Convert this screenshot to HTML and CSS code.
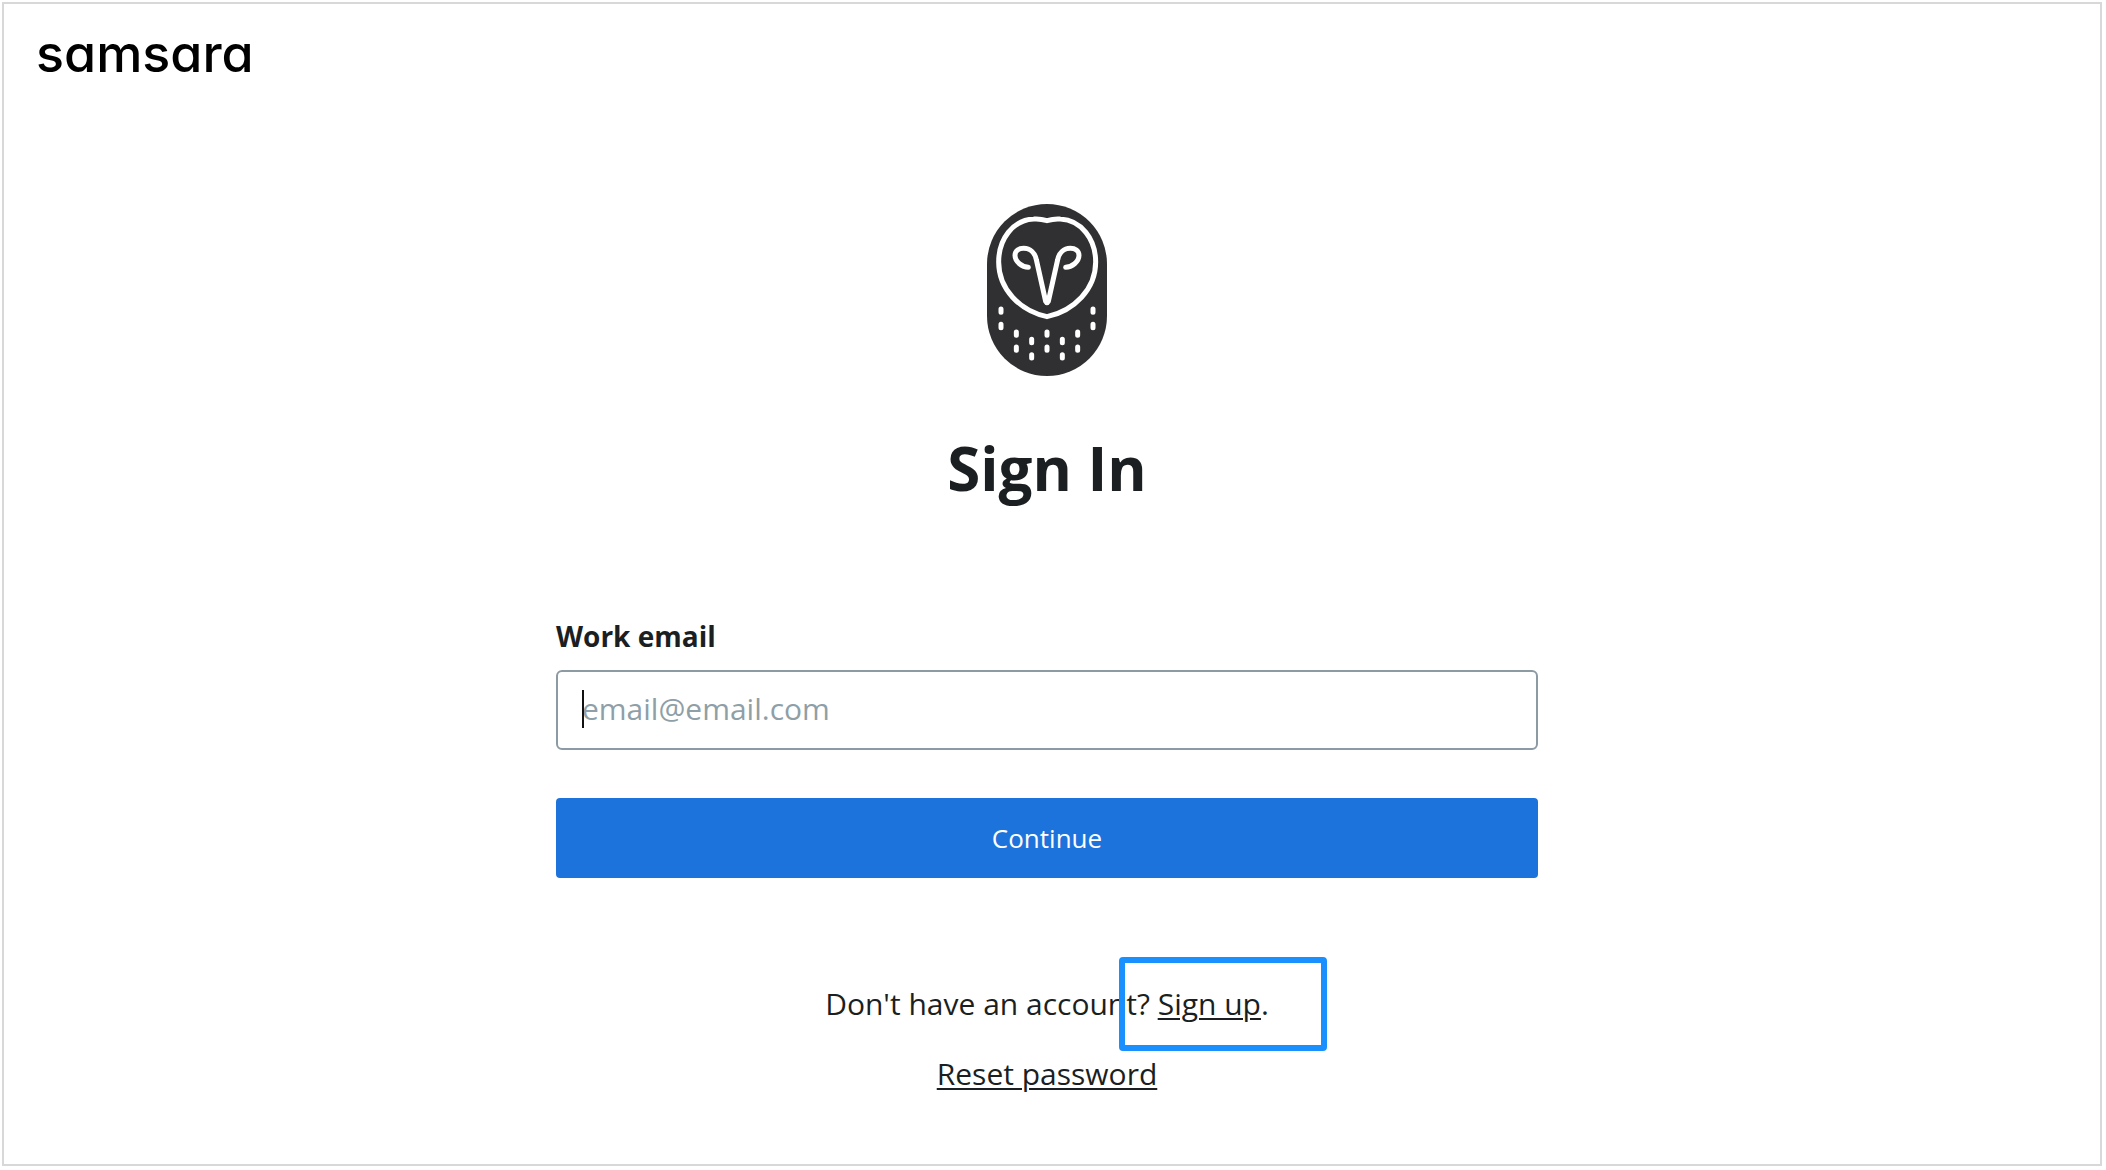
FILE: index.html
```html
<!DOCTYPE html>
<html lang="en">

<head>
    <meta charset="UTF-8" />
    <meta name="viewport" content="width=device-width, initial-scale=1.0" />
    <title>Samsara - Sign In</title>

    <link rel="stylesheet" href="styles.css">
</head>

<body>
    <div class="page">
        <header class="header">
            <a class="logo" href="#">samsara</a>
        </header>

        <main class="signin">
            <svg class="owl" viewBox="78 42 360 516" aria-hidden="true">
                <rect x="78" y="42" width="360" height="516" rx="180" fill="#303032" />
                <g fill="none" stroke="#fff" stroke-width="15" stroke-linecap="round" stroke-linejoin="round">
                    <path d="M258 92C242 87 229 86 218 87C155 90 113 148 113 216C113 297 176 362 258 380C340 362 404 297 404 216C404 148 361 90 298 87C287 86 274 87 258 92Z" />
                    <path d="M202 232C184 231 162 216 162 196C162 181 174 175 188 175C208 175 222 189 226 209L254 334Q258 342 262 334L290 209C294 189 308 175 328 175C342 175 354 181 354 196C354 216 332 231 314 232" />
                </g>
                <path d="M120 357v10M120 403v10M396 357v10M396 403v10M166 426v10M166 471v10M350 426v10M350 471v10M212 448v10M212 494v10M304 448v10M304 494v10M258 426v10M258 471v10" fill="none" stroke="#fff" stroke-width="15" stroke-linecap="round" />
            </svg>

            <h1>Sign In</h1>

            <form id="signinForm">
                <label for="email">Work email</label>
                <div class="field">
                    <input type="email" id="email" name="email" placeholder="email@email.com" required />
                    <span class="caret"></span>
                </div>
                <button type="submit">Continue</button>
            </form>

            <p class="signup">Don't have an account? <a href="#">Sign up</a>.<span class="highlight"></span></p>
            <p><a href="#">Reset password</a></p>
        </main>
    </div>
</body>

</html>
```
FILE: styles.css
```css
* {
    box-sizing: border-box;
}

body {
    margin: 0;
    padding: 2px 4px 4px 2px;
    background-color: #fff;
    color: #1b1f22;
    font-family: "Open Sans", sans-serif;
}

.page {
    min-height: calc(100vh - 6px);
    padding: 0 42px 0 32px;
    border: 2px solid #d8d8d8;
}

.header {
    height: 200px;
    padding-top: 18px;
}

.logo {
    color: #000;
    font-family: Inter, sans-serif;
    font-size: 52px;
    font-weight: 500;
    line-height: 64px;
    font-feature-settings: "cv11" 1;
    text-decoration: none;
}

.signin {
    display: flex;
    flex-direction: column;
    align-items: center;
    max-width: 982px;
    margin: 0 auto;
}

.owl {
    width: 120px;
    height: 172px;
}

h1 {
    margin: 52px 0 108px;
    font-size: 60px;
    font-weight: bold;
    line-height: 80px;
}

form {
    display: flex;
    flex-direction: column;
    width: 100%;
    margin-bottom: 106px;
}

label {
    margin-bottom: 14px;
    font-size: 28px;
    font-weight: bold;
    line-height: 40px;
}

.field {
    position: relative;
    margin-bottom: 48px;
}

input {
    display: block;
    width: 100%;
    height: 80px;
    padding: 0 24px 4px;
    border: 2px solid #8c9ba3;
    border-radius: 6px;
    color: #1b1f22;
    font-family: inherit;
    font-size: 30px;
}

input:focus {
    outline: none;
}

input::placeholder {
    color: #8f9fa7;
    opacity: 1;
}

/* text cursor at the start of the empty field */
.caret {
    position: absolute;
    top: 20px;
    left: 26px;
    width: 2px;
    height: 38px;
    background-color: #111;
}

button {
    height: 80px;
    border: none;
    border-radius: 4px;
    background-color: #1c73dc;
    color: #fff;
    font-family: inherit;
    font-size: 26px;
    cursor: pointer;
}

button:hover {
    background-color: #165fb8;
}

p {
    margin: 0 0 30px;
    font-size: 30px;
    line-height: 40px;
}

p a {
    color: inherit;
    text-decoration-thickness: 2px;
    text-underline-offset: 3px;
}

.signup {
    position: relative;
    width: 100%;
    text-align: center;
}

/* callout box over the sign up link */
.highlight {
    position: absolute;
    top: -27px;
    left: calc(50% + 72px);
    width: 208px;
    height: 94px;
    border: 6px solid #1a90ff;
    border-radius: 4px;
}
```
